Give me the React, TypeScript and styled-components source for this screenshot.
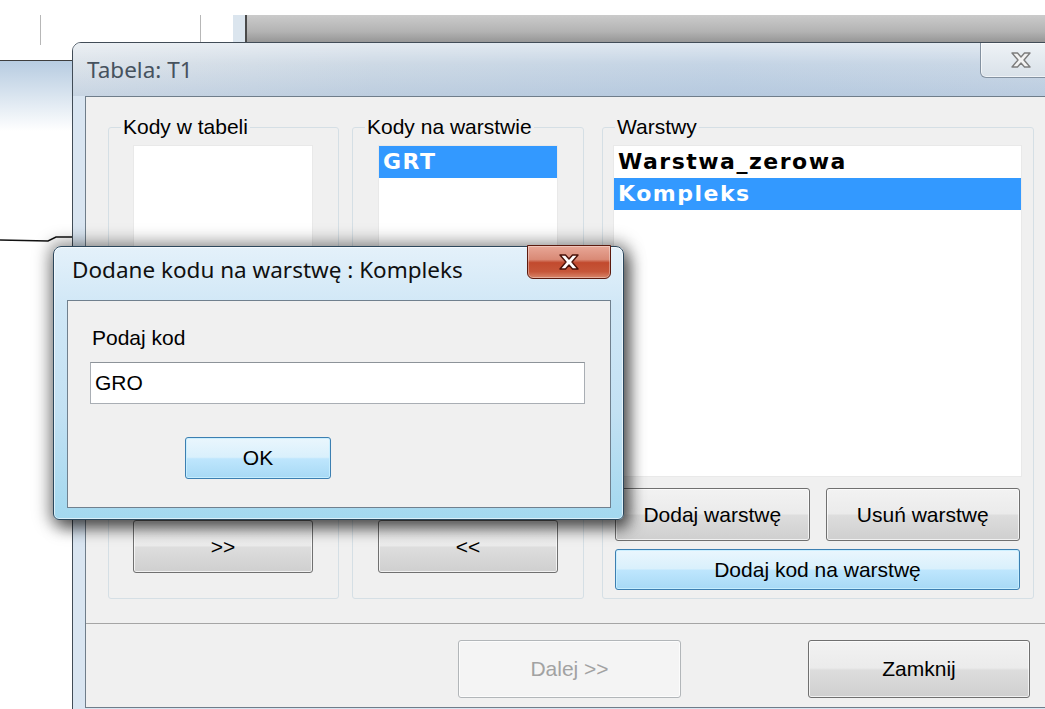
import styled, { createGlobalStyle } from "styled-components";

const GlobalStyle = createGlobalStyle`
  html, body {
    margin: 0;
    padding: 0;
    background: #ffffff;
  }
  body {
    font-family: "Liberation Sans", Arial, sans-serif;
    overflow: hidden;
  }
`;

const Desktop = styled.div`
  position: relative;
  width: 1045px;
  height: 709px;
  overflow: hidden;
  background: #ffffff;
`;

/* drawing program behind the dialogs */
const BackApp = styled.div`
  position: absolute;
  top: 15px;
  left: 0;
  right: 0;
  bottom: 0;
  display: flex;
  flex-direction: column;
`;

const Ruler = styled.div`
  display: flex;
  height: 30px;
`;

const RulerCell = styled.div<{ $w: number; $tint?: string; $line?: boolean }>`
  width: ${(p) => p.$w}px;
  background: ${(p) => p.$tint ?? "#ffffff"};
  border-right: ${(p) => (p.$line ? "1px solid #b7b7b7" : "none")};
`;

const RulerEdge = styled.div`
  width: 2px;
  background: #4a4a4a;
`;

const GrayPane = styled.div`
  flex: 1;
  background: linear-gradient(180deg, #cbcbcb 0%, #b3b3b3 55%, #8e8e8e 100%);
`;

const ToolStrip = styled.div`
  height: 15px;
  border-bottom: 1px solid #3e3e3e;
`;

const Band = styled.div`
  height: 70px;
  background: linear-gradient(180deg, #b7cce1 0%, #d6e2ee 45%, #ffffff 100%);
`;

const Canvas = styled.div`
  flex: 1;
  padding-top: 99px;
`;

/* main dialog */
const MainWindow = styled.div`
  position: absolute;
  left: 72px;
  top: 42px;
  width: 1000px;
  display: flex;
  flex-direction: column;
  border: 1px solid #414c57;
  border-radius: 9px 9px 0 0;
  background: #d9e5f1;
  overflow: hidden;
`;

const MainTitleBar = styled.div`
  height: 53px;
  display: flex;
  align-items: flex-start;
  justify-content: space-between;
  padding-left: 14px;
  background:
    linear-gradient(180deg, rgba(255, 255, 255, 0.45), rgba(255, 255, 255, 0) 40%, rgba(140, 170, 205, 0.25)),
    linear-gradient(90deg, #dce3ea 0%, #cdd9e5 30%, #c4d4e5 65%, #cbd8e6 100%);
`;

const TitleText = styled.span<{ $active?: boolean; $top: number }>`
  margin-top: ${(p) => p.$top}px;
  font-family: "Noto Sans", "Open Sans", sans-serif;
  font-size: 22.5px;
  line-height: 28px;
  color: ${(p) => (p.$active ? "#101010" : "#46525e")};
  white-space: nowrap;
`;

const CloseTab = styled.div`
  width: 79px;
  height: 34px;
  margin-right: 12px;
  display: flex;
  align-items: center;
  justify-content: center;
  border: 1px solid #8391a0;
  border-top: none;
  border-radius: 0 0 6px 6px;
  background: linear-gradient(180deg, #eef2f6, #d9e1e9);
  box-shadow: inset 0 0 0 1px rgba(255, 255, 255, 0.6);
`;

const MainFrame = styled.div`
  display: flex;
  padding: 0 12px 12px;
`;

const Client = styled.div`
  flex: 1;
  display: flex;
  flex-direction: column;
  border: 1px solid #6f7d8a;
  background: #f0f0f0;
`;

const GroupRow = styled.div`
  display: flex;
  align-items: flex-start;
  margin-top: 18px;
  padding-left: 22px;
`;

const Group = styled.fieldset<{ $w: number; $gap?: number }>`
  width: ${(p) => p.$w}px;
  min-width: 0;
  margin: 0 0 0 ${(p) => p.$gap ?? 0}px;
  padding: 0;
  box-sizing: border-box;
  border: 1px solid #d5dfe5;
  border-radius: 3px;
`;

const Legend = styled.legend`
  margin-left: 12px;
  padding: 0 2px;
  font-size: 21px;
  line-height: 24px;
  color: #000;
`;

const GroupBody = styled.div<{ $pad: string }>`
  height: 459px;
  box-sizing: border-box;
  display: flex;
  flex-direction: column;
  padding: ${(p) => p.$pad};
`;

const ListBox = styled.div<{ $h?: number }>`
  ${(p) => (p.$h ? `height: ${p.$h}px;` : "flex: 1;")}
  box-sizing: border-box;
  background: #ffffff;
  border: 1px solid #e9e9e9;
  font-family: "DejaVu Sans", sans-serif;
  font-weight: bold;
  font-size: 22px;
`;

const ListItem = styled.div<{ $selected?: boolean }>`
  height: 32px;
  line-height: 32px;
  padding-left: 4px;
  letter-spacing: 1.5px;
  white-space: nowrap;
  background: ${(p) => (p.$selected ? "#3399ff" : "transparent")};
  color: ${(p) => (p.$selected ? "#ffffff" : "#000000")};
`;

type Variant = "normal" | "focus" | "disabled";

const Button = styled.button<{ $variant?: Variant; $w?: number; $h: number; $grow?: boolean }>`
  ${(p) => (p.$w ? `width: ${p.$w}px;` : "")}
  flex: ${(p) => (p.$grow ? "1 1 0" : "0 0 auto")};
  height: ${(p) => p.$h}px;
  padding: 0;
  box-sizing: border-box;
  font-family: "Liberation Sans", Arial, sans-serif;
  font-size: 21px;
  border-radius: 3px;
  color: ${(p) => (p.$variant === "disabled" ? "#a2a2a2" : "#000000")};
  border: 1px solid
    ${(p) => (p.$variant === "focus" ? "#3c7fb1" : p.$variant === "disabled" ? "#b2b6b9" : "#707070")};
  background: ${(p) =>
    p.$variant === "focus"
      ? "linear-gradient(180deg, #eaf6fd 0%, #d9f0fc 48%, #bee6fd 52%, #a7d9f5 100%)"
      : p.$variant === "disabled"
      ? "#f4f4f4"
      : "linear-gradient(180deg, #f2f2f2 0%, #ebebeb 48%, #dddddd 52%, #cfcfcf 100%)"};
  box-shadow: inset 0 0 0 1px
    ${(p) => (p.$variant === "focus" ? "rgba(200, 238, 255, 0.9)" : "rgba(255, 255, 255, 0.7)")};
`;

const ButtonPair = styled.div`
  display: flex;
  gap: 16px;
  margin-top: 11px;
  padding: 0 2px;
`;

const WideSlot = styled.div`
  display: flex;
  margin-top: 8px;
  padding: 0 2px;
`;

const StackGap = styled.div`
  height: 11px;
  flex-shrink: 0;
`;

const Separator = styled.div`
  margin-top: 24px;
  height: 1px;
  background: #a5a5a5;
`;

const BottomBar = styled.div`
  height: 83px;
  box-sizing: border-box;
  display: flex;
  align-items: flex-start;
  gap: 127px;
  padding: 16px 0 0 372px;
`;

/* modal input dialog */
const Popup = styled.div`
  position: absolute;
  left: 53px;
  top: 246px;
  width: 571px;
  box-sizing: border-box;
  display: flex;
  flex-direction: column;
  padding: 0 12px 11px 13px;
  border: 1px solid #2c475c;
  border-radius: 8px 8px 6px 6px;
  background: linear-gradient(180deg, #e4f1fa 0%, #d0e7f6 22%, #c3e1f3 60%, #a3d8ef 100%);
  box-shadow:
    inset 0 0 0 1px rgba(255, 255, 255, 0.6),
    0 0 16px 5px rgba(0, 0, 0, 0.35),
    5px 8px 16px rgba(0, 0, 0, 0.55);
`;

const PopupTitleBar = styled.div`
  height: 53px;
  display: flex;
  align-items: flex-start;
  justify-content: space-between;
  padding-left: 5px;
`;

const RedClose = styled.div`
  width: 84px;
  height: 34px;
  margin-top: -2px;
  box-sizing: border-box;
  display: flex;
  align-items: center;
  justify-content: center;
  border: 1px solid #5b1a0e;
  border-radius: 0 0 6px 6px;
  background: linear-gradient(180deg, #e8a797 0%, #d98a76 42%, #c24a2e 52%, #c65639 80%, #d8866a 100%);
  box-shadow: inset 0 0 0 1px rgba(255, 255, 255, 0.35);
`;

const PopupClient = styled.div`
  height: 208px;
  box-sizing: border-box;
  display: flex;
  flex-direction: column;
  align-items: flex-start;
  padding: 25px 0 0 22px;
  border: 1px solid #70808e;
  background: #f0f0f0;
`;

const FieldLabel = styled.label`
  padding-left: 2px;
  font-size: 21px;
  line-height: 24px;
  color: #000;
`;

const TextField = styled.input`
  margin-top: 12px;
  width: 495px;
  height: 42px;
  box-sizing: border-box;
  padding: 0 4px;
  font-family: "Liberation Sans", Arial, sans-serif;
  font-size: 21px;
  color: #000;
  background: #ffffff;
  border: 1px solid #a9aeb4;
  border-top-color: #8d9399;
  outline: none;
`;

const OkSlot = styled.div`
  margin: 33px 0 0 95px;
  display: flex;
`;

const XMark = ({ fill, stroke }: { fill: string; stroke: string }) => (
  <svg width="24" height="18" viewBox="0 0 24 18">
    <path
      d="M3 2h5.5l3.5 4 3.5-4H21l-6 7 6 7h-5.5L12 12l-3.5 4H3l6-7z"
      fill={fill}
      stroke={stroke}
      strokeWidth="1.4"
      strokeLinejoin="round"
    />
  </svg>
);

function App() {
  return (
    <Desktop>
      <GlobalStyle />

      <BackApp>
        <Ruler>
          <RulerCell $w={40} $line />
          <RulerCell $w={159} $line />
          <RulerCell $w={32} />
          <RulerCell $w={12} $tint="#dbe5ee" />
          <RulerEdge />
          <GrayPane />
        </Ruler>
        <ToolStrip />
        <Band />
        <Canvas>
          <svg width="80" height="10" viewBox="0 0 80 10">
            <path d="M0 6 L48 7 L56 3 L80 3" fill="none" stroke="#111" strokeWidth="1.5" />
          </svg>
        </Canvas>
      </BackApp>

      <MainWindow>
        <MainTitleBar>
          <TitleText $top={13}>Tabela: T1</TitleText>
          <CloseTab>
            <XMark fill="#f3f3f3" stroke="#7d7d7d" />
          </CloseTab>
        </MainTitleBar>
        <MainFrame>
          <Client>
            <GroupRow>
              <Group $w={231}>
                <Legend>Kody w tabeli</Legend>
                <GroupBody $pad="6px 25px 25px 24px">
                  <ListBox />
                  <StackGap />
                  <Button $h={53}>&gt;&gt;</Button>
                </GroupBody>
              </Group>
              <Group $w={232} $gap={13}>
                <Legend>Kody na warstwie</Legend>
                <GroupBody $pad="6px 25px 25px 25px">
                  <ListBox>
                    <ListItem $selected>GRT</ListItem>
                  </ListBox>
                  <StackGap />
                  <Button $h={53}>&lt;&lt;</Button>
                </GroupBody>
              </Group>
              <Group $w={432} $gap={18}>
                <Legend>Warstwy</Legend>
                <GroupBody $pad="6px 11px 8px 10px">
                  <ListBox $h={332}>
                    <ListItem>Warstwa_zerowa</ListItem>
                    <ListItem $selected>Kompleks</ListItem>
                  </ListBox>
                  <ButtonPair>
                    <Button $h={53} $grow>Dodaj warstwę</Button>
                    <Button $h={53} $grow>Usuń warstwę</Button>
                  </ButtonPair>
                  <WideSlot>
                    <Button $h={41} $grow $variant="focus">Dodaj kod na warstwę</Button>
                  </WideSlot>
                </GroupBody>
              </Group>
            </GroupRow>
            <Separator />
            <BottomBar>
              <Button $w={223} $h={58} $variant="disabled" disabled>
                Dalej &gt;&gt;
              </Button>
              <Button $w={222} $h={58}>Zamknij</Button>
            </BottomBar>
          </Client>
        </MainFrame>
      </MainWindow>

      <Popup>
        <PopupTitleBar>
          <TitleText $active $top={9}>Dodane kodu na warstwę : Kompleks</TitleText>
          <RedClose>
            <XMark fill="#ffffff" stroke="#4a1208" />
          </RedClose>
        </PopupTitleBar>
        <PopupClient>
          <FieldLabel htmlFor="kod">Podaj kod</FieldLabel>
          <TextField id="kod" defaultValue="GRO" />
          <OkSlot>
            <Button $w={146} $h={42} $variant="focus">OK</Button>
          </OkSlot>
        </PopupClient>
      </Popup>
    </Desktop>
  );
}

export default App;
